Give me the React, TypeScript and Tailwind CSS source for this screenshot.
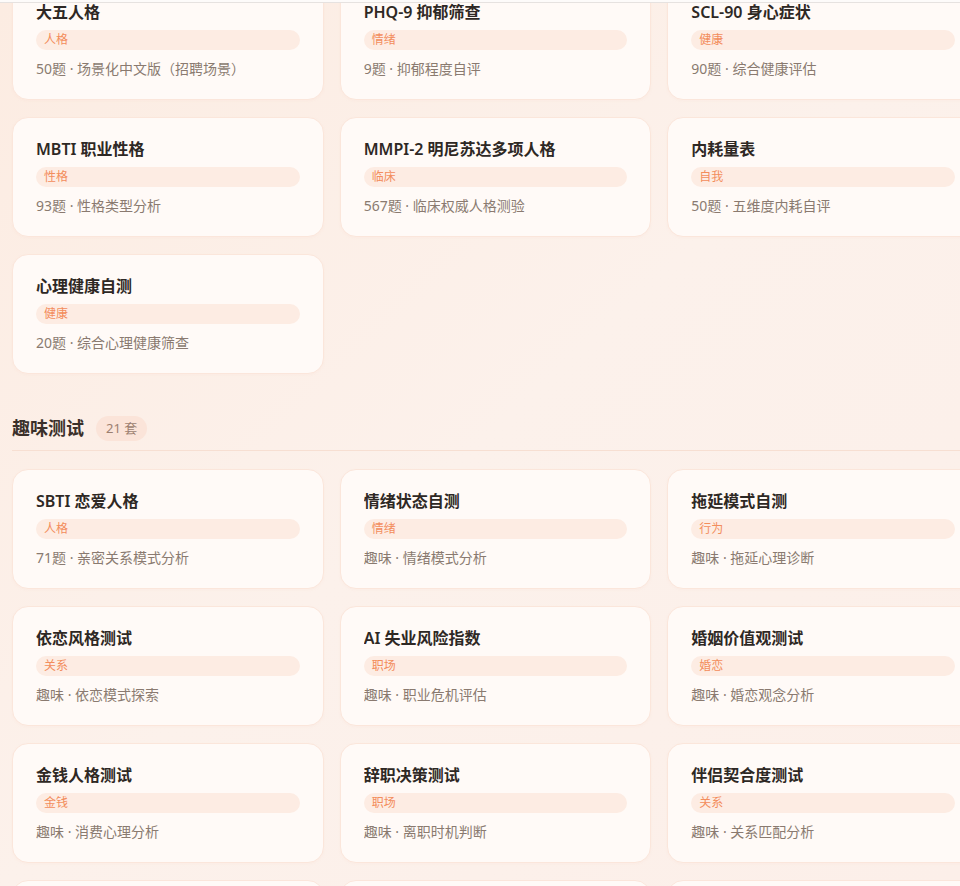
type Test = { title: string; tag: string; desc: string };

const proTests: Test[] = [
  { title: "大五人格", tag: "人格", desc: "50题 · 场景化中文版（招聘场景）" },
  { title: "PHQ-9 抑郁筛查", tag: "情绪", desc: "9题 · 抑郁程度自评" },
  { title: "SCL-90 身心症状", tag: "健康", desc: "90题 · 综合健康评估" },
  { title: "MBTI 职业性格", tag: "性格", desc: "93题 · 性格类型分析" },
  { title: "MMPI-2 明尼苏达多项人格", tag: "临床", desc: "567题 · 临床权威人格测验" },
  { title: "内耗量表", tag: "自我", desc: "50题 · 五维度内耗自评" },
  { title: "心理健康自测", tag: "健康", desc: "20题 · 综合心理健康筛查" },
];

const funTests: Test[] = [
  { title: "SBTI 恋爱人格", tag: "人格", desc: "71题 · 亲密关系模式分析" },
  { title: "情绪状态自测", tag: "情绪", desc: "趣味 · 情绪模式分析" },
  { title: "拖延模式自测", tag: "行为", desc: "趣味 · 拖延心理诊断" },
  { title: "依恋风格测试", tag: "关系", desc: "趣味 · 依恋模式探索" },
  { title: "AI 失业风险指数", tag: "职场", desc: "趣味 · 职业危机评估" },
  { title: "婚姻价值观测试", tag: "婚恋", desc: "趣味 · 婚恋观念分析" },
  { title: "金钱人格测试", tag: "金钱", desc: "趣味 · 消费心理分析" },
  { title: "辞职决策测试", tag: "职场", desc: "趣味 · 离职时机判断" },
  { title: "伴侣契合度测试", tag: "关系", desc: "趣味 · 关系匹配分析" },
];

function TestCard({ t }: { t: Test }) {
  return (
    <div className="h-[120px] rounded-2xl border border-[#fbe6db] bg-[#fffaf7] px-[23px] pt-5 pb-[22px] shadow-[0_1px_3px_rgba(240,190,160,0.08)]">
      <div className="text-[16px] leading-[22px] font-semibold text-[#2e2824] truncate">{t.title}</div>
      <div className="mt-[7px] h-5 rounded-full bg-[#fdece3] px-2 text-[12px] leading-5 text-[#f38d5c]">{t.tag}</div>
      <div className="mt-[9px] text-[14px] leading-5 text-[#8a7a70] truncate">{t.desc}</div>
    </div>
  );
}

// 下一行只露出卡片顶边
function PeekCard() {
  return <div className="h-[120px] rounded-2xl border border-[#fbe6db] bg-[#fffaf7]" />;
}

export default function App() {
  return (
    <div
      className="relative h-[886px] w-full overflow-hidden bg-gradient-to-br from-[#fcece2] via-[#fcf1eb] to-[#fcefe9]"
      style={{ fontFamily: '"Noto Sans", "Noto Sans CJK SC", sans-serif' }}
    >
      {/* header edge from the sticky top bar */}
      <div className="absolute inset-x-0 top-0 z-10 h-[3px] border-b border-[#e6e2e0] bg-[#fdfbfa]" />

      <div className="-mt-5 ml-3 w-[967px]">
        {/* 专业测评 */}
        <div className="grid grid-cols-3 gap-x-4 gap-y-[17px]">
          {proTests.map((t) => (
            <TestCard key={t.title} t={t} />
          ))}
        </div>

        {/* 趣味测试 */}
        <div className="mt-[41px] flex h-[26px] items-center gap-3">
          <h2 className="text-[18px] font-bold leading-[26px] text-[#3a302a]">趣味测试</h2>
          <span className="rounded-full bg-[#fbe4d9] px-2.5 text-[13px] leading-[25px] text-[#9b7f70]">21 套</span>
        </div>
        <div className="mt-[9px] border-b border-[#f7dfd2]" />

        <div className="mt-[18px] grid grid-cols-3 gap-x-4 gap-y-[17px]">
          {funTests.map((t) => (
            <TestCard key={t.title} t={t} />
          ))}
          <PeekCard />
          <PeekCard />
          <PeekCard />
        </div>
      </div>
    </div>
  );
}
